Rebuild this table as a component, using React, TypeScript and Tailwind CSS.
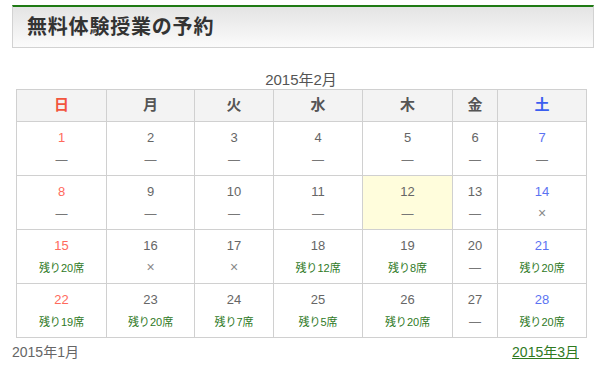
const weekdays = [
  { label: "日", color: "text-[#f2553d]" },
  { label: "月", color: "text-[#555]" },
  { label: "火", color: "text-[#555]" },
  { label: "水", color: "text-[#555]" },
  { label: "木", color: "text-[#555]" },
  { label: "金", color: "text-[#555]" },
  { label: "土", color: "text-[#3b5ef0]" },
];

const colWidths = ["w-[90px]", "w-[88px]", "w-[79px]", "w-[89px]", "w-[90px]", "w-[45px]", "w-[89px]"];

// mark: "-" none, "x" full, number = seats left
type Day = { d: number; mark: string | number; today?: boolean };

const weeks: Day[][] = [
  [
    { d: 1, mark: "-" },
    { d: 2, mark: "-" },
    { d: 3, mark: "-" },
    { d: 4, mark: "-" },
    { d: 5, mark: "-" },
    { d: 6, mark: "-" },
    { d: 7, mark: "-" },
  ],
  [
    { d: 8, mark: "-" },
    { d: 9, mark: "-" },
    { d: 10, mark: "-" },
    { d: 11, mark: "-" },
    { d: 12, mark: "-", today: true },
    { d: 13, mark: "-" },
    { d: 14, mark: "x" },
  ],
  [
    { d: 15, mark: 20 },
    { d: 16, mark: "x" },
    { d: 17, mark: "x" },
    { d: 18, mark: 12 },
    { d: 19, mark: 8 },
    { d: 20, mark: "-" },
    { d: 21, mark: 20 },
  ],
  [
    { d: 22, mark: 19 },
    { d: 23, mark: 20 },
    { d: 24, mark: 7 },
    { d: 25, mark: 5 },
    { d: 26, mark: 20 },
    { d: 27, mark: "-" },
    { d: 28, mark: 20 },
  ],
];

function Mark({ mark }: { mark: string | number }) {
  if (mark === "-") return <span className="text-[12px] text-[#777]">—</span>;
  if (mark === "x") return <span className="text-[14px] text-[#888]">×</span>;
  return <span className="text-[11px] text-[#2f7a1f]">残り{mark}席</span>;
}

export default function App() {
  return (
    <div className="w-[600px] h-[368px] bg-white px-3 pt-[5px] font-['Liberation_Sans','Noto_Sans_CJK_JP',sans-serif]">
      <div className="w-[582px] h-[43px] border-t-2 border-t-[#1f7a14] border-x border-b border-[#d2d2d2] bg-gradient-to-b from-[#e4e4e4] to-[#fbfbfb] flex items-center pl-[14px]">
        <h1 className="text-[20px] font-bold tracking-[0.8px] text-[#333]">無料体験授業の予約</h1>
      </div>

      <div className="mt-[23px] ml-1 w-[570px]">
        <div className="text-center text-[15px] leading-[18px] text-[#555]">2015年2月</div>
        <table className="border-collapse w-[570px] table-fixed">
          <thead>
            <tr className="h-[32px] bg-[#f3f3f3]">
              {weekdays.map((w, i) => (
                <th key={w.label} className={`${colWidths[i]} border border-[#d0d0d0] text-[15px] font-bold ${w.color}`}>
                  {w.label}
                </th>
              ))}
            </tr>
          </thead>
          <tbody>
            {weeks.map((week, wi) => (
              <tr key={wi} className="h-[54px]">
                {week.map((day, i) => (
                  <td
                    key={day.d}
                    className={`border border-[#d0d0d0] text-center align-top pt-[7px] ${day.today ? "bg-[#fffddc]" : ""}`}
                  >
                    <div
                      className={`text-[13px] leading-[18px] ${
                        i === 0 ? "text-[#ff6a5c]" : i === 6 ? "text-[#5b73f2]" : "text-[#666]"
                      }`}
                    >
                      {day.d}
                    </div>
                    <div className="leading-[20px] mt-[2px]">
                      <Mark mark={day.mark} />
                    </div>
                  </td>
                ))}
              </tr>
            ))}
          </tbody>
        </table>
      </div>

      <div className="mt-[4px] flex justify-between pr-[9px] text-[14px] leading-[20px]">
        <span className="text-[#666]">2015年1月</span>
        <a href="#" className="text-[#2f7a1f] underline">2015年3月</a>
      </div>
    </div>
  );
}
